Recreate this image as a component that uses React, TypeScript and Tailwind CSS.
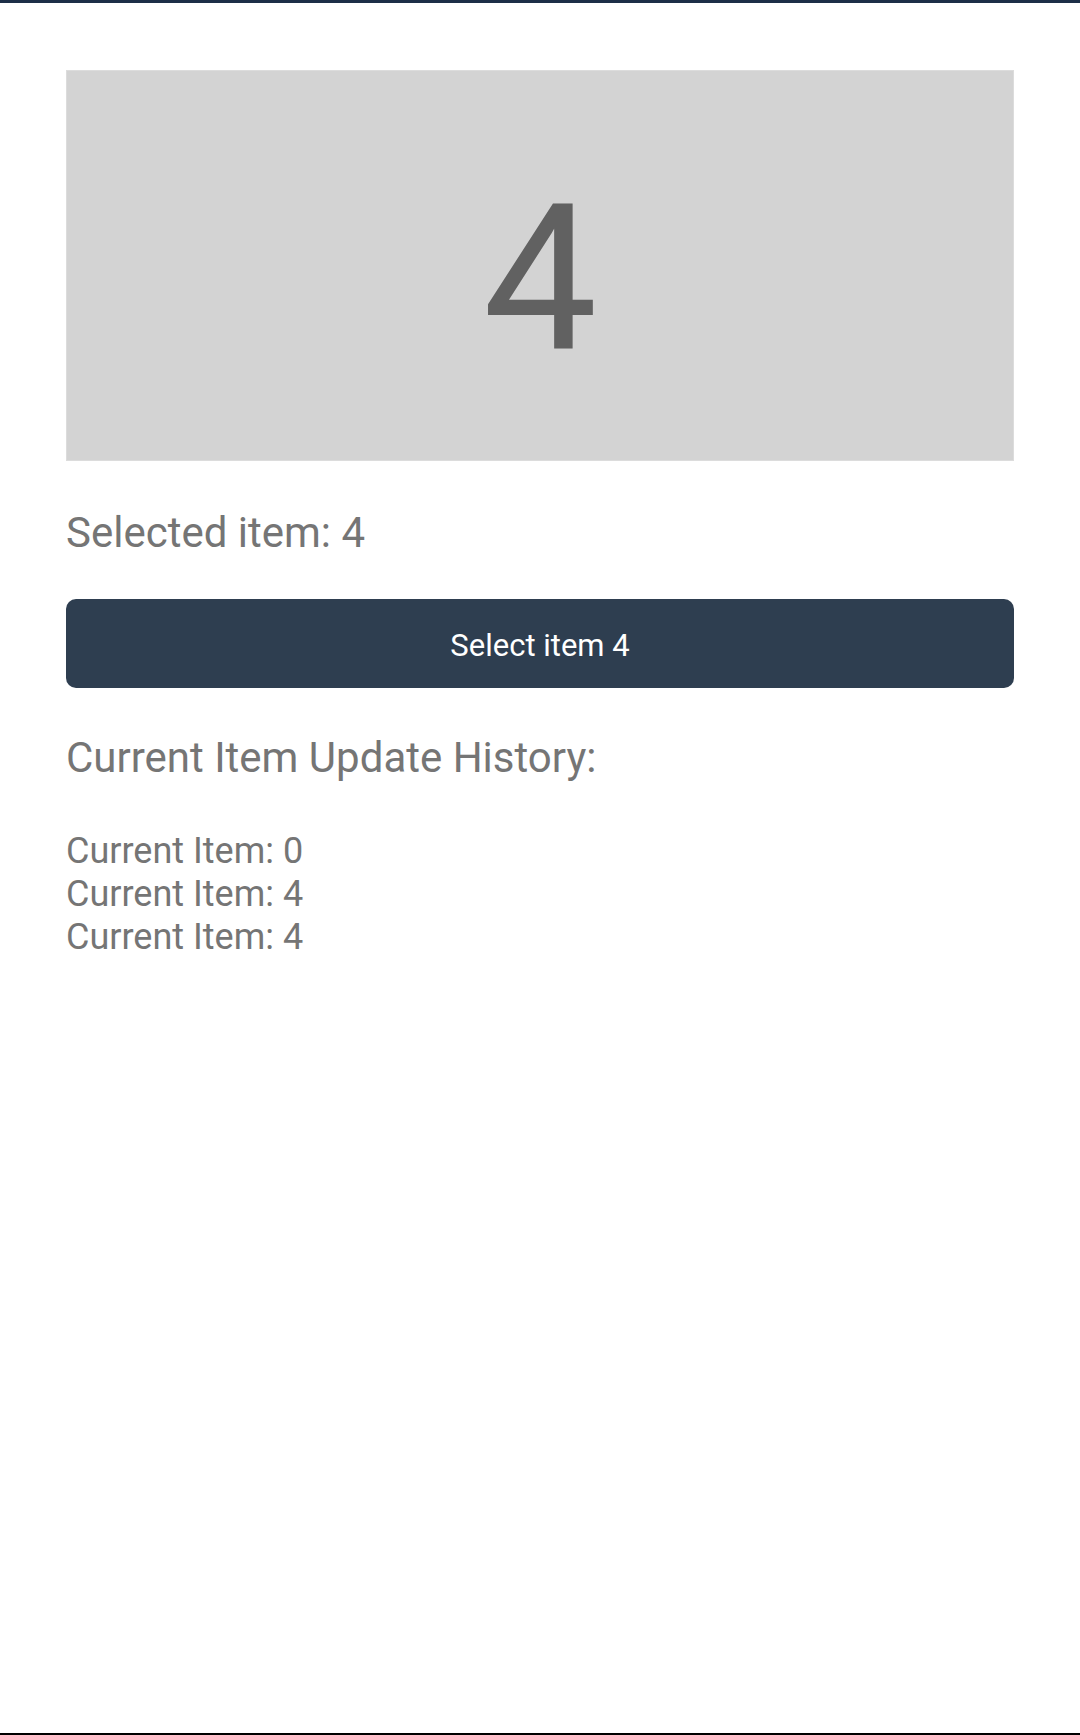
import React from "react";

const history = [0, 4, 4];

const App: React.FC = () => {
  return (
    <div
      className="w-[1080px] h-[1735px] bg-white flex flex-col border-t-[3px] border-[#1c2f47] border-b-2 border-b-black"
      style={{ fontFamily: "Roboto, 'Noto Sans', sans-serif" }}
    >
      <div className="flex-1 px-[66px] pt-[67px]">
        {/* Display box */}
        <div className="h-[391px] bg-[#d3d3d3] border border-[#dcdcdc] flex items-center justify-center pt-[28px]">
          <span className="text-[204px] leading-none text-[#616161]">4</span>
        </div>

        <p className="mt-[47px] text-[42px] leading-[50px] text-[#757575]">
          Selected item: 4
        </p>

        <button className="mt-[41px] w-full h-[89px] rounded-[10px] bg-[#2e3e50] text-white text-[31px] pt-[5px]">
          Select item 4
        </button>

        <p className="mt-[45px] text-[42px] leading-[50px] text-[#757575]">
          Current Item Update History:
        </p>

        <div className="mt-[47px] text-[36px] leading-[43px] text-[#757575]">
          {history.map((item, i) => (
            <div key={i}>Current Item: {item}</div>
          ))}
        </div>
      </div>
    </div>
  );
};

export default App;
